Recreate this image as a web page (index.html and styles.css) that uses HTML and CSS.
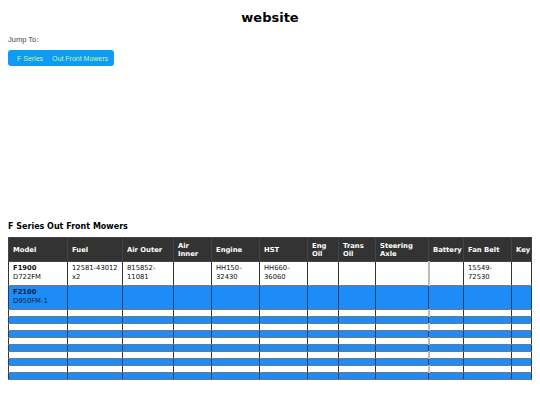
FILE: index.html
```html
<!DOCTYPE html>
<html>
<head>
<meta charset="utf-8">
<title>website</title>
<link rel="stylesheet" href="styles.css">
</head>
<body>
<h1 class="site-title">website</h1>
<div class="jump-label">Jump To:</div>
<nav class="jump-nav">
  <a class="jump-link" href="#f">F Series</a>
  <a class="jump-link" href="#f">Out Front Mowers</a>
</nav>
<h2 class="section-title" id="f">F Series Out Front Mowers</h2>
<table class="parts">
  <colgroup>
    <col class="c-model"><col class="c-fuel"><col class="c-aout"><col class="c-ain"><col class="c-eng"><col class="c-hst"><col class="c-eoil"><col class="c-toil"><col class="c-steer"><col class="c-bat"><col class="c-fan"><col class="c-key">
  </colgroup>
  <thead>
    <tr>
      <th>Model</th><th>Fuel</th><th>Air Outer</th><th>Air Inner</th><th>Engine</th><th>HST</th><th>Eng Oil</th><th>Trans Oil</th><th>Steering Axle</th><th class="bat">Battery</th><th>Fan Belt</th><th>Key</th>
    </tr>
  </thead>
  <tbody>
    <tr class="row-white">
      <td><b>F1900</b><br>D722FM</td><td>12581-43012<br>x2</td><td>815852-<br>11081</td><td></td><td>HH150-<br>32430</td><td>HH660-<br>36060</td><td></td><td></td><td></td><td class="bat"></td><td>15549-<br>72530</td><td></td>
    </tr>
    <tr class="row-blue">
      <td><b>F2100</b><br>D950FM-1</td><td></td><td></td><td></td><td></td><td></td><td></td><td></td><td></td><td class="bat"></td><td></td><td></td>
    </tr>
    <tr class="row-white empty"><td></td><td></td><td></td><td></td><td></td><td></td><td></td><td></td><td></td><td class="bat"></td><td></td><td></td></tr>
    <tr class="row-blue empty"><td></td><td></td><td></td><td></td><td></td><td></td><td></td><td></td><td></td><td class="bat"></td><td></td><td></td></tr>
    <tr class="row-white empty"><td></td><td></td><td></td><td></td><td></td><td></td><td></td><td></td><td></td><td class="bat"></td><td></td><td></td></tr>
    <tr class="row-blue empty"><td></td><td></td><td></td><td></td><td></td><td></td><td></td><td></td><td></td><td class="bat"></td><td></td><td></td></tr>
    <tr class="row-white empty"><td></td><td></td><td></td><td></td><td></td><td></td><td></td><td></td><td></td><td class="bat"></td><td></td><td></td></tr>
    <tr class="row-blue empty"><td></td><td></td><td></td><td></td><td></td><td></td><td></td><td></td><td></td><td class="bat"></td><td></td><td></td></tr>
    <tr class="row-white empty"><td></td><td></td><td></td><td></td><td></td><td></td><td></td><td></td><td></td><td class="bat"></td><td></td><td></td></tr>
    <tr class="row-blue empty"><td></td><td></td><td></td><td></td><td></td><td></td><td></td><td></td><td></td><td class="bat"></td><td></td><td></td></tr>
    <tr class="row-white empty"><td></td><td></td><td></td><td></td><td></td><td></td><td></td><td></td><td></td><td class="bat"></td><td></td><td></td></tr>
    <tr class="row-blue empty"><td></td><td></td><td></td><td></td><td></td><td></td><td></td><td></td><td></td><td class="bat"></td><td></td><td></td></tr>
  </tbody>
</table>
</body>
</html>
```
FILE: styles.css
```css
html, body {
  margin: 0;
  padding: 0;
  background: #fff;
}
body {
  padding: 0 8px;
  font-family: "DejaVu Sans", Verdana, sans-serif;
  color: #000;
}
.site-title {
  margin: 0;
  padding-top: 10px;
  height: 18px;
  line-height: 16px;
  font-size: 13px;
  font-weight: bold;
  text-align: center;
}
.jump-label {
  margin-top: 7px;
  font-family: "Liberation Sans", Arial, sans-serif;
  font-size: 7.5px;
  line-height: 9px;
  color: #444;
}
.jump-nav {
  margin-top: 6px;
  width: 106px;
  height: 16px;
  box-sizing: border-box;
  background: #0c9bf7;
  border-radius: 3px;
  display: flex;
  align-items: center;
  gap: 9px;
  padding-left: 9px;
  font-family: "Liberation Sans", Arial, sans-serif;
  font-size: 7px;
}
.jump-link {
  color: #d2f58f;
  text-decoration: none;
}
.section-title {
  margin: 156px 0 0;
  font-size: 8px;
  line-height: 10px;
  font-weight: bold;
}
.parts {
  margin-top: 5px;
  width: 100%;
  table-layout: fixed;
  border-collapse: collapse;
  font-size: 6.8px;
  line-height: 8.5px;
  border: 1px solid #555;
}
.c-model { width: 59px; }
.c-fuel { width: 55px; }
.c-aout { width: 51px; }
.c-ain { width: 38px; }
.c-eng { width: 48px; }
.c-hst { width: 48px; }
.c-eoil { width: 31px; }
.c-toil { width: 37px; }
.c-steer { width: 53px; }
.c-bat { width: 35px; }
.c-fan { width: 48px; }
.c-key { width: 20px; }
.parts th {
  background: #333;
  color: #fff;
  text-align: left;
  font-weight: bold;
  height: 24px;
  padding: 0 2px 0 4px;
  border: 1px solid #444;
  vertical-align: middle;
  box-sizing: border-box;
  line-height: 8px;
}
.parts td {
  padding: 2px 2px 0 4px;
  border-left: 1px solid #333;
  border-right: 1px solid #333;
  border-top: 1px solid #777;
  border-bottom: 1px solid #777;
  vertical-align: top;
  height: 24px;
  box-sizing: border-box;
  color: #111;
}
.parts td.bat {
  border-left: 2px solid #bbb;
}
.row-white td {
  background: #fff;
}
.row-blue td {
  background: #1e8cf7;
  border-left-color: #1a3f6b;
  border-right-color: #1a3f6b;
}
.row-blue td.bat {
  border-left: 1px solid #1a3f6b;
}
.row-blue td b,
.row-blue td {
  color: #0b1f3c;
}
.parts tr.empty td {
  height: 7px;
  padding: 0;
}
```
